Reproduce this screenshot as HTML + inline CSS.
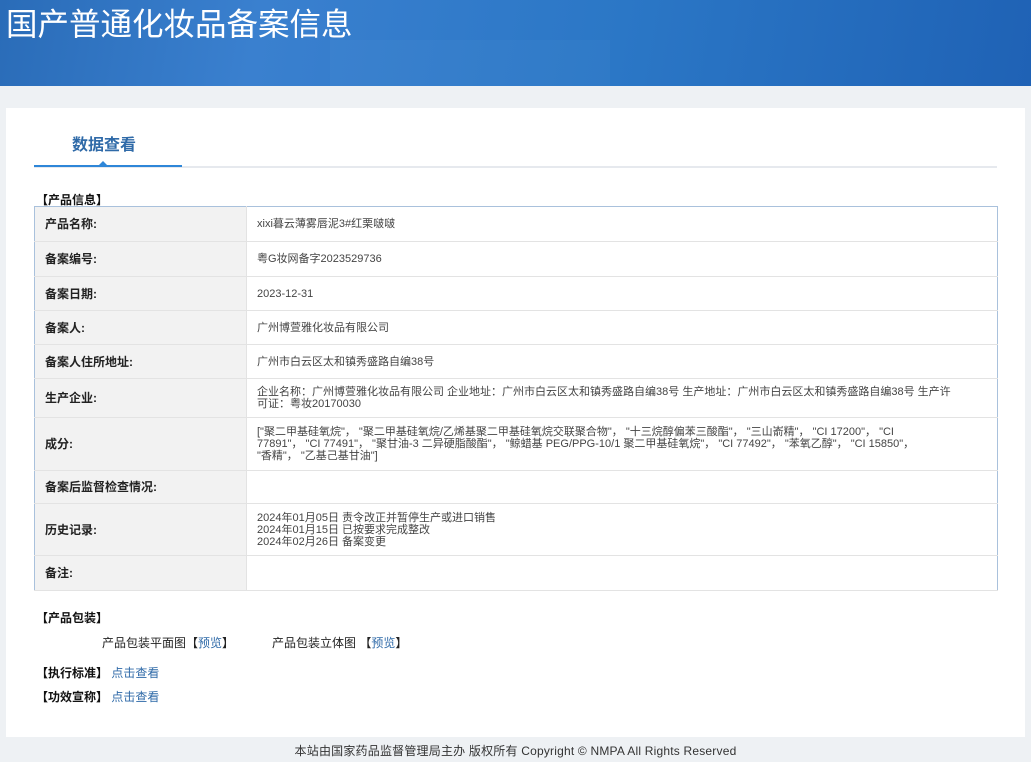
<!DOCTYPE html>
<html><head><meta charset="utf-8"><style>
*{margin:0;padding:0;box-sizing:border-box}
body{width:1031px;height:762px;background:#eef1f4;font-family:"Liberation Sans","Noto Sans CJK SC",sans-serif;position:relative;overflow:hidden;color:#333}
.hdr{position:absolute;left:0;top:0;width:1031px;height:86px;background:linear-gradient(100deg,#2a6cb8 0%,#3a80cf 25%,#2b77c6 60%,#1f62b5 100%);overflow:hidden}
.hdr h1{position:absolute;left:6px;top:3px;font-size:31.5px;font-weight:normal;color:#fff;font-family:"Noto Sans CJK SC",sans-serif;line-height:38px}
.panel{position:absolute;left:6px;top:108px;width:1019px;height:629px;background:#fff}
.tab{position:absolute;left:72px;top:131px;font-size:16px;color:#2f6aa8;font-weight:bold}
.tl{position:absolute;left:34px;top:166px;width:963px;height:2px;background:#e6e9ee}
.tb{position:absolute;left:34px;top:165px;width:148px;height:2px;background:#2e86d8}
.tri{position:absolute;left:98px;top:161px;width:0;height:0;border-left:5px solid transparent;border-right:5px solid transparent;border-bottom:5px solid #2e86d8}
.sec{position:absolute;font-size:12px;font-weight:bold;color:#111}
table{position:absolute;left:34px;top:206px;width:964px;border-collapse:collapse;border:1px solid #a9c1dc;font-size:11px}
td{border-bottom:1px solid #e3e3e3;vertical-align:middle;line-height:12px}
td.l{width:212px;background:#f2f2f2;font-weight:bold;font-size:12px;padding-left:10px;color:#222;border-right:1px solid #e3e3e3}
td.v{padding-left:10px;padding-right:40px;color:#444}
.t{position:absolute;font-size:12px;color:#222}
a{color:#2f6aa8;text-decoration:none}
.ft{position:absolute;top:742px;left:0;width:1031px;text-align:center;font-size:12px;color:#333;letter-spacing:0.2px}
</style></head><body>
<div class="hdr"><div style="position:absolute;left:330px;top:40px;width:280px;height:60px;background:rgba(255,255,255,0.025)"></div><h1>国产普通化妆品备案信息</h1></div>
<div class="panel"></div>
<div class="tab">数据查看</div>
<div class="tl"></div><div class="tb"></div><div class="tri"></div>
<div class="sec" style="left:36px;top:191px">【产品信息】</div>
<table>
<tr style="height:35px"><td class="l">产品名称:</td><td class="v">xixi暮云薄雾唇泥3#红栗啵啵</td></tr>
<tr style="height:35px"><td class="l">备案编号:</td><td class="v">粤G妆网备字2023529736</td></tr>
<tr style="height:34px"><td class="l">备案日期:</td><td class="v">2023-12-31</td></tr>
<tr style="height:34px"><td class="l">备案人:</td><td class="v">广州博萱雅化妆品有限公司</td></tr>
<tr style="height:34px"><td class="l">备案人住所地址:</td><td class="v">广州市白云区太和镇秀盛路自编38号</td></tr>
<tr style="height:39px"><td class="l">生产企业:</td><td class="v">企业名称：广州博萱雅化妆品有限公司 企业地址：广州市白云区太和镇秀盛路自编38号 生产地址：广州市白云区太和镇秀盛路自编38号 生产许可证：粤妆20170030</td></tr>
<tr style="height:53px"><td class="l">成分:</td><td class="v" style="padding-right:80px"><div style="width:660px">["聚二甲基硅氧烷"， "聚二甲基硅氧烷/乙烯基聚二甲基硅氧烷交联聚合物"， "十三烷醇偏苯三酸酯"， "三山嵛精"， "CI 17200"， "CI 77891"， "CI 77491"， "聚甘油-3 二异硬脂酸酯"， "鲸蜡基 PEG/PPG-10/1 聚二甲基硅氧烷"， "CI 77492"， "苯氧乙醇"， "CI 15850"， "香精"， "乙基己基甘油"]</div></td></tr>
<tr style="height:33px"><td class="l">备案后监督检查情况:</td><td class="v"></td></tr>
<tr style="height:52px"><td class="l">历史记录:</td><td class="v">2024年01月05日 责令改正并暂停生产或进口销售<br>2024年01月15日 已按要求完成整改<br>2024年02月26日 备案变更</td></tr>
<tr style="height:35px"><td class="l">备注:</td><td class="v"></td></tr>
</table>
<div class="sec" style="left:36px;top:609px">【产品包装】</div>
<div class="t" style="left:102px;top:634px">产品包装平面图【<a>预览</a>】</div>
<div class="t" style="left:272px;top:634px">产品包装立体图 【<a>预览</a>】</div>
<div class="sec" style="left:36px;top:664px">【执行标准】 <a style="font-weight:normal">点击查看</a></div>
<div class="sec" style="left:36px;top:688px">【功效宣称】 <a style="font-weight:normal">点击查看</a></div>
<div class="ft">本站由国家药品监督管理局主办 版权所有 Copyright © NMPA All Rights Reserved</div>
</body></html>
